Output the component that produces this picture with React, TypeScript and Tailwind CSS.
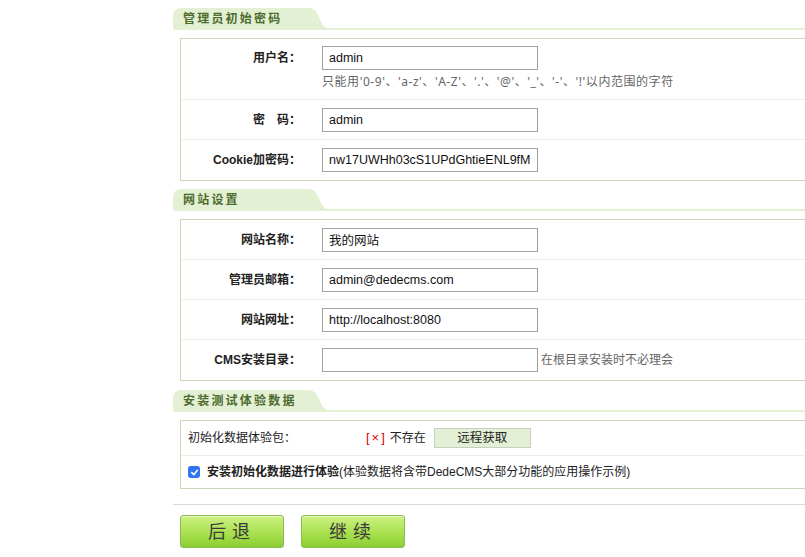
import type { ReactNode } from "react";

const font = "font-['Liberation_Sans','Noto_Sans_CJK_SC',sans-serif]";
const wideFont = "font-['Noto_Sans','Noto_Sans_CJK_SC',sans-serif]";

function SectionHeader({ title }: { title: string }) {
  return (
    <div className="flex h-[22px]">
      <div className="h-[22px] w-[135px] rounded-tl-[8px] rounded-bl-[3px] bg-[#e3f0d4] pl-[10px] text-[12px] font-bold leading-[22px] tracking-[2.2px] text-[#4d6b2d]">
        {title}
      </div>
      <svg width="20" height="22" viewBox="0 0 20 22" className="shrink-0">
        <path d="M0 0 C6 0 8 3 11 9 C14 16 16 20 20 20 L20 22 L0 22 Z" fill="#e3f0d4" />
      </svg>
      <div className="h-[2px] flex-1 self-end bg-[#e3f0d4]" />
    </div>
  );
}

function TextInput({ value }: { value: string }) {
  return (
    <input
      type="text"
      defaultValue={value}
      className="h-[24px] w-[216px] border border-[#a0a0a0] bg-white px-[6px] text-[12.5px] text-[#111] outline-none"
    />
  );
}

function FieldRow({
  label,
  value,
  height,
  border = true,
  hint,
  note,
}: {
  label: string;
  value: string;
  height: string;
  border?: boolean;
  hint?: ReactNode;
  note?: string;
}) {
  return (
    <div className={`flex ${height} ${border ? "border-t border-[#ececec]" : ""} ${hint ? "items-start pt-[7px]" : "items-center"}`}>
      <div className="w-[131px] shrink-0 pr-[11px] text-right text-[12px] font-bold leading-[24px] text-[#222]">
        {label}
      </div>
      <div className="pl-[10px]">
        <div className="flex items-center">
          <TextInput value={value} />
          {note && <span className="ml-[3px] text-[12px] text-[#666]">{note}</span>}
        </div>
        {hint && (
          <div className={`mt-[3px] text-[12px] leading-[18px] tracking-[0.55px] text-[#666] ${wideFont}`}>{hint}</div>
        )}
      </div>
    </div>
  );
}

function Box({ children }: { children: ReactNode }) {
  return <div className="ml-[7px] border border-[#c9dbb5] bg-white">{children}</div>;
}

function GreenButton({ label }: { label: string }) {
  return (
    <button
      type="button"
      className="h-[33px] w-[104px] rounded-[3px] border border-[#8cba55] bg-linear-to-b from-[#cdf183] via-[#ace252] to-[#8ccf31] text-[18px] leading-none tracking-[6px] text-[#3a3a3a] shadow-[inset_0_1px_0_rgba(255,255,255,0.5)]"
    >
      {label}
    </button>
  );
}

export default function App() {
  return (
    <div className={`h-[557px] w-[805px] overflow-hidden bg-white ${font}`}>
      <div className="ml-[173px] w-[700px] pt-[8px]">
        <SectionHeader title="管理员初始密码" />
        <div className="mt-[8px]">
          <Box>
            <FieldRow
              label="用户名："
              value="admin"
              height="h-[60px]"
              border={false}
              hint="只能用'0-9'、'a-z'、'A-Z'、'.'、'@'、'_'、'-'、'!'以内范围的字符"
            />
            <FieldRow label="密　码：" value="admin" height="h-[40px]" />
            <FieldRow label="Cookie加密码：" value="nw17UWHh03cS1UPdGhtieENL9fM" height="h-[41px]" />
          </Box>
        </div>

        <div className="mt-[8px]">
          <SectionHeader title="网站设置" />
        </div>
        <div className="mt-[8px]">
          <Box>
            <FieldRow label="网站名称：" value="我的网站" height="h-[39px]" border={false} />
            <FieldRow label="管理员邮箱：" value="admin@dedecms.com" height="h-[40px]" />
            <FieldRow label="网站网址：" value="http://localhost:8080" height="h-[40px]" />
            <FieldRow label="CMS安装目录：" value="" height="h-[41px]" note="在根目录安装时不必理会" />
          </Box>
        </div>

        <div className="mt-[9px]">
          <SectionHeader title="安装测试体验数据" />
        </div>
        <div className="mt-[8px]">
          <Box>
            <div className="flex h-[34px] items-center text-[12px] text-[#222]">
              <div className="w-[185px] shrink-0 pl-[7px]">初始化数据体验包：</div>
              <span className="text-[13px] tracking-[2px] text-[#d00]">[×]</span>
              <span className="ml-[3px]">不存在</span>
              <button
                type="button"
                className="ml-[8px] h-[20px] w-[97px] border border-[#c8cfc0] bg-[#e3f0d5] text-[12.5px] text-[#222]"
              >
                远程获取
              </button>
            </div>
            <div className="flex h-[33px] items-center border-t border-[#ececec] pl-[7px] text-[12px] text-[#222]">
              <span className="flex h-[12px] w-[12px] items-center justify-center rounded-[3px] bg-[#2f74f0]">
                <svg width="9" height="9" viewBox="0 0 10 10">
                  <path d="M2 5.2 L4.2 7.4 L8.2 2.6" fill="none" stroke="#fff" strokeWidth="1.8" strokeLinecap="round" strokeLinejoin="round" />
                </svg>
              </span>
              <span className="ml-[7px] font-bold">安装初始化数据进行体验</span>
              <span>(体验数据将含带DedeCMS大部分功能的应用操作示例)</span>
            </div>
          </Box>
        </div>

        <div className="mt-[15px] h-px bg-[#d9d9d9]" />
        <div className="ml-[7px] mt-[10px] flex gap-[17px]">
          <GreenButton label="后退" />
          <GreenButton label="继续" />
        </div>
      </div>
    </div>
  );
}
